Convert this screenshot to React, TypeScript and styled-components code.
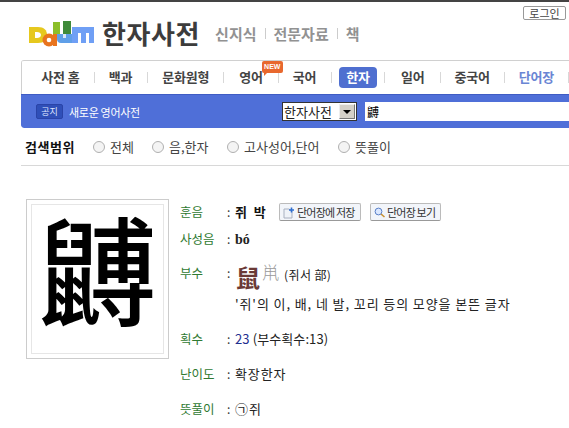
import React from 'react';
import styled, { createGlobalStyle } from 'styled-components';

const GlobalStyle = createGlobalStyle`
  html, body { margin: 0; padding: 0; background: #fff; overflow: hidden; }
  body { font-family: "Noto Sans CJK KR", "Liberation Sans", sans-serif; font-size: 12px; color: #333; }
`;

const Page = styled.div`
  width: 569px;
  height: 428px;
  overflow: hidden;
  border-top: 2px solid #444;
  box-sizing: border-box;
`;

const TopBar = styled.div`
  display: flex;
  justify-content: flex-end;
  padding: 4px 3px 0 0;
  height: 13px;
  box-sizing: content-box;
  margin-bottom: -4px;
`;

const LoginButton = styled.button`
  width: 43px;
  height: 14px;
  padding: 0;
  border: 1px solid #999;
  border-radius: 2px;
  background: #fff;
  color: #444;
  font: 11px/12px "Noto Sans CJK KR", sans-serif;
`;

const Header = styled.div`
  display: flex;
  align-items: center;
  height: 36px;
  margin-bottom: 9px;
  padding-left: 28px;
`;

const Title = styled.h1`
  margin: 0 15px 0 7px;
  font-size: 26px;
  line-height: 30px;
  font-weight: 700;
  color: #3c3c3c;
  letter-spacing: 0.6px;
`;

const ServiceLink = styled.span`
  font-size: 15px;
  font-weight: 700;
  color: #929292;
`;

const ServiceSep = styled.span`
  width: 1px;
  height: 11px;
  margin: 0 8px;
  background: #ccc;
`;

const NavPanel = styled.div`
  margin-left: 21px;
  border-top: 1px solid #d0d0d0;
  border-radius: 3px 0 0 3px;
  overflow: hidden;
`;

const Tabs = styled.div`
  display: flex;
  align-items: center;
  height: 33px;
  padding-left: 19px;
  border-left: 1px solid #d0d0d0;
`;

const Tab = styled.span<{ $w: number; $on?: boolean; $blue?: boolean }>`
  position: relative;
  width: ${p => p.$w}px;
  height: 21px;
  line-height: 20px;
  text-align: center;
  white-space: nowrap;
  font-size: 13px;
  font-weight: 700;
  letter-spacing: -0.2px;
  border-radius: 4px;
  color: ${p => (p.$on ? '#fff' : p.$blue ? '#6a86d4' : '#444')};
  background: ${p => (p.$on ? '#4f6fd0' : 'transparent')};
`;

const TabSep = styled.span<{ $l: number; $r: number }>`
  width: 1px;
  height: 11px;
  margin: 0 ${p => p.$r}px 0 ${p => p.$l}px;
  background: #d8d8d8;
`;

const NewBadge = styled.span`
  position: absolute;
  top: -6px;
  right: -20px;
  width: 21px;
  height: 12px;
  border-radius: 2px;
  background: #e8682e;
  color: #fff;
  font: 700 7px/12px "Liberation Sans", sans-serif;
  letter-spacing: 0;
  &::after {
    content: '';
    position: absolute;
    left: 2px;
    bottom: -3px;
    border-left: 3px solid #e8682e;
    border-bottom: 3px solid transparent;
  }
`;

const SearchBar = styled.div`
  display: flex;
  align-items: center;
  height: 34px;
  padding-left: 15px;
  background: #4f6fd8;
  border-top: 1px solid #3f5cc4;
  border-radius: 0 0 0 3px;
  box-sizing: border-box;
`;

const Notice = styled.span`
  width: 25px;
  height: 13px;
  border: 1px solid #2a44a8;
  border-radius: 2px;
  background: #2f4fb8;
  color: #dfe6ff;
  font-size: 9px;
  line-height: 13px;
  text-align: center;
  box-sizing: content-box;
`;

const NoticeText = styled.span`
  margin-left: 6px;
  width: 213px;
  color: #fff;
  font-size: 11px;
  letter-spacing: -0.3px;
`;

const DictSelect = styled.div`
  display: flex;
  align-items: center;
  width: 75px;
  height: 19px;
  border: 1px solid #333;
  box-sizing: border-box;
  background: #fff;
  color: #222;
  font-size: 13px;
`;

const SelectLabel = styled.span`
  flex: 1;
  padding-left: 1px;
  white-space: nowrap;
`;

const SelectArrow = styled.span`
  display: flex;
  align-items: center;
  justify-content: center;
  width: 16px;
  height: 15px;
  margin-right: 1px;
  background: #d4d0c8;
  border: 1px solid;
  border-color: #eee #777 #777 #eee;
  box-sizing: border-box;
  &::after {
    content: '';
    border-top: 4px solid #000;
    border-left: 4px solid transparent;
    border-right: 4px solid transparent;
  }
`;

const QueryBox = styled.div`
  flex: 1;
  height: 19px;
  margin-left: 8px;
  padding-left: 2px;
  background: #fff;
  color: #000;
  font-size: 12px;
  line-height: 19px;
`;

const ScopeRow = styled.div`
  display: flex;
  align-items: center;
  height: 37px;
  margin-left: 21px;
  padding-left: 4px;
  border-bottom: 1px solid #d8d8d8;
`;

const ScopeTitle = styled.b`
  width: 68px;
  color: #111;
  font-size: 13px;
  letter-spacing: 0.5px;
`;

const ScopeOption = styled.label<{ $w: number }>`
  display: flex;
  align-items: center;
  width: ${p => p.$w}px;
  color: #444;
  font-size: 13px;
  white-space: nowrap;
`;

const Radio = styled.i`
  width: 12px;
  height: 12px;
  margin-right: 5px;
  border: 1px solid #b0b0b0;
  border-radius: 50%;
  box-sizing: border-box;
  background: #f4f4f4;
`;

const Entry = styled.div`
  display: flex;
  margin: 33px 0 0 26px;
`;

const GlyphFrame = styled.div`
  width: 143px;
  height: 160px;
  padding: 4px;
  border: 1px solid #ccc;
  box-sizing: border-box;
  flex: none;
`;

const GlyphInner = styled.div`
  height: 100%;
  border: 1px solid #e6e6e6;
  box-sizing: border-box;
  text-align: center;
  color: #000;
  font-size: 118px;
  font-weight: 500;
  line-height: 121px;
`;

const Info = styled.div`
  display: flex;
  flex-direction: column;
  margin-left: 11px;
  padding-top: 3px;
`;

const Row = styled.div<{ $h: number }>`
  display: flex;
  align-items: flex-start;
  min-height: ${p => p.$h}px;
`;

const Label = styled.span`
  width: 47px;
  color: #2f7a32;
  font-size: 12.5px;
  line-height: 20px;
  flex: none;
`;

const Colon = styled.span`
  width: 8px;
  color: #333;
  font-size: 12px;
  line-height: 20px;
  flex: none;
`;

const Value = styled.div`
  color: #222;
  font-size: 13px;
  line-height: 20px;
  letter-spacing: 0.9px;
  white-space: nowrap;
`;

const ActionLine = styled.div`
  display: flex;
  align-items: flex-start;
`;

const Reading = styled.b`
  width: 44px;
  color: #111;
  word-spacing: 2px;
`;

const Btn = styled.span<{ $w: number }>`
  display: flex;
  align-items: center;
  width: ${p => p.$w}px;
  height: 18px;
  margin: 1px 9px 0 0;
  padding-left: 2px;
  border: 1px solid #bbb;
  border-bottom-color: #999;
  border-radius: 2px;
  background: #f2f5fa;
  color: #333;
  box-sizing: border-box;
  font-size: 11px;
  letter-spacing: -0.8px;
`;

const Pinyin = styled.b`
  font-family: "Liberation Serif", serif;
  font-size: 14px;
  color: #222;
  letter-spacing: 0;
`;

const RadicalLine = styled.div`
  display: flex;
  align-items: flex-start;
  height: 31px;
`;

const RadicalMain = styled.span`
  margin: 2px 2px 0 1px;
  color: #6b3a36;
  font-size: 24px;
  line-height: 24px;
  font-weight: 700;
  letter-spacing: 0;
`;

const RadicalAlt = styled.span`
  margin-right: 5px;
  color: #999;
  font-size: 17px;
  line-height: 18px;
  font-weight: 300;
  letter-spacing: 0;
`;

const RadicalName = styled.span`
  margin-top: 2px;
  font-size: 12px;
  letter-spacing: 0.4px;
`;

const StrokeCount = styled(Value)`
  letter-spacing: 0.1px;
`;

const Strokes = styled.span`
  color: #1f2f8f;
`;

function PlusIcon() {
  return (
    <svg width="13" height="13" viewBox="0 0 13 13" style={{ marginRight: 2 }}>
      <path d="M2 3h5l3 2v7H2z" fill="#eef2f8" stroke="#a8b0c0" />
      <path d="M7 4h5M9.500 1.500v5" stroke="#2f6fd0" strokeWidth="1.6" />
    </svg>
  );
}

function LensIcon() {
  return (
    <svg width="13" height="13" viewBox="0 0 13 13" style={{ marginRight: 1 }}>
      <circle cx="5.500" cy="5.500" r="3.400" fill="#dbe8ff" stroke="#5a80c8" />
      <path d="M8 8l3.500 3" stroke="#c89030" strokeWidth="1.600" />
    </svg>
  );
}

function DaumLogo() {
  return (
    <svg width="67" height="27" viewBox="0 0 67 27">
      <path d="M1 7h9c6 0 9 3 9 8s-3 8-9 8H1z" fill="#e6c81e" />
      <path d="M7 12h2c2 0 4 1 4 3s-2 3-4 3H7z" fill="#fff" />
      <path d="M25 2h7v13h-7z" fill="#8cbf2a" />
      <path d="M35 1h8v13h-8z" fill="#3f8a3a" />
      <path d="M29 14h15v9H33c-3 0-4-2-4-4z" fill="#5f9fe8" />
      <path d="M35 14h3v4h-3z" fill="#d8e6fa" />
      <circle cx="21" cy="20" r="6.500" fill="#e8741e" />
      <circle cx="21" cy="20" r="2.300" fill="#fff" />
      <path d="M25 14h4v12h-4z" fill="#e8741e" />
      <path d="M44 7h22v16h-5V13h-3v10h-5V13h-3v10h-6z" fill="#6f9ff5" />
    </svg>
  );
}

export default function App() {
  return (
    <Page>
      <GlobalStyle />
      <TopBar>
        <LoginButton>로그인</LoginButton>
      </TopBar>
      <Header>
        <DaumLogo />
        <Title>한자사전</Title>
        <ServiceLink>신지식</ServiceLink>
        <ServiceSep />
        <ServiceLink>전문자료</ServiceLink>
        <ServiceSep />
        <ServiceLink>책</ServiceLink>
      </Header>
      <NavPanel>
        <Tabs>
          <Tab $w={40}>사전 홈</Tab>
          <TabSep $l={14} $r={14} />
          <Tab $w={24}>백과</Tab>
          <TabSep $l={15} $r={14} />
          <Tab $w={48}>문화원형</Tab>
          <TabSep $l={14} $r={15} />
          <Tab $w={24}>영어<NewBadge>NEW</NewBadge></Tab>
          <TabSep $l={15} $r={14} />
          <Tab $w={24}>국어</Tab>
          <TabSep $l={15} $r={7} />
          <Tab $w={39} $on>한자</Tab>
          <TabSep $l={7} $r={16} />
          <Tab $w={24}>일어</Tab>
          <TabSep $l={15} $r={14} />
          <Tab $w={36}>중국어</Tab>
          <TabSep $l={14} $r={14} />
          <Tab $w={36} $blue>단어장</Tab>
          <TabSep $l={14} $r={0} />
        </Tabs>
        <SearchBar>
          <Notice>공지</Notice>
          <NoticeText>새로운 영어사전</NoticeText>
          <DictSelect>
            <SelectLabel>한자사전</SelectLabel>
            <SelectArrow />
          </DictSelect>
          <QueryBox>䶈</QueryBox>
        </SearchBar>
      </NavPanel>
      <ScopeRow>
        <ScopeTitle>검색범위</ScopeTitle>
        <ScopeOption $w={59}><Radio />전체</ScopeOption>
        <ScopeOption $w={75}><Radio />음,한자</ScopeOption>
        <ScopeOption $w={111}><Radio />고사성어,단어</ScopeOption>
        <ScopeOption $w={60}><Radio />뜻풀이</ScopeOption>
      </ScopeRow>
      <Entry>
        <GlyphFrame>
          <GlyphInner>䶈</GlyphInner>
        </GlyphFrame>
        <Info>
          <Row $h={27}>
            <Label>훈음</Label>
            <Colon>:</Colon>
            <Value>
              <ActionLine>
                <Reading>쥐 박</Reading>
                <Btn $w={82}><PlusIcon />단어장에 저장</Btn>
                <Btn $w={71}><LensIcon />단어장 보기</Btn>
              </ActionLine>
            </Value>
          </Row>
          <Row $h={34}>
            <Label>사성음</Label>
            <Colon>:</Colon>
            <Value><Pinyin>bó</Pinyin></Value>
          </Row>
          <Row $h={66}>
            <Label>부수</Label>
            <Colon>:</Colon>
            <Value>
              <RadicalLine>
                <RadicalMain>鼠</RadicalMain>
                <RadicalAlt>鼡</RadicalAlt>
                <RadicalName>(쥐서 部)</RadicalName>
              </RadicalLine>
              '쥐'의 이, 배, 네 발, 꼬리 등의 모양을 본뜬 글자
            </Value>
          </Row>
          <Row $h={35}>
            <Label>획수</Label>
            <Colon>:</Colon>
            <StrokeCount><Strokes>23</Strokes> (부수획수:13)</StrokeCount>
          </Row>
          <Row $h={35}>
            <Label>난이도</Label>
            <Colon>:</Colon>
            <Value>확장한자</Value>
          </Row>
          <Row $h={20}>
            <Label>뜻풀이</Label>
            <Colon>:</Colon>
            <Value>㉠쥐</Value>
          </Row>
        </Info>
      </Entry>
    </Page>
  );
}
